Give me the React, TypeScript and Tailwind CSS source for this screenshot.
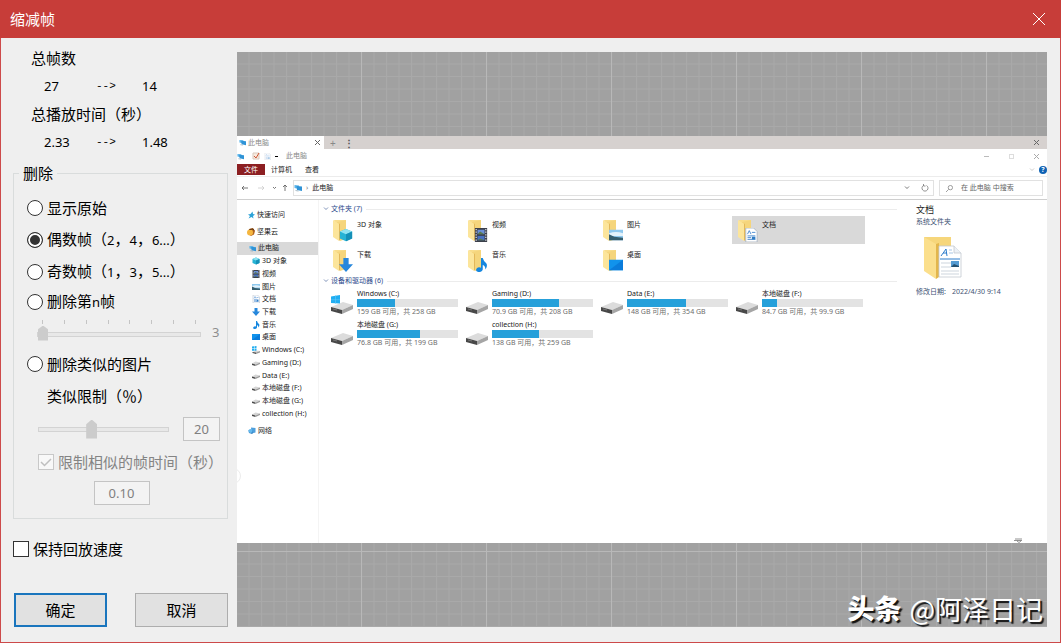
import type { ReactNode } from 'react'

type IconName =
  | 'star' | 'nut' | 'pc' | 'cube' | 'film' | 'image' | 'doc' | 'download'
  | 'music' | 'desktop' | 'drive' | 'windrive' | 'network'

const glyphs: Record<IconName, ReactNode> = {
  star: <path d="M11 1l1 5 4 1-4 3 1 5-4-3-6 3 3-5-4-3 5-1z" fill="#2ea3d8" />,
  nut: (
    <>
      <path d="M4 2l8-2 4 6-2 7-6 3-6-4z" fill="#b5651d" />
      <circle cx="6" cy="9" r="6" fill="#f5b63f" />
      <path d="M5 3l7-1 2 3" stroke="#5b3213" strokeWidth="2" fill="none" />
    </>
  ),
  pc: (
    <>
      <path d="M1 2l9 1v7l-9-2z" fill="#5ab4ea" />
      <path d="M5 4l11 1v9l-10-2z" fill="#2f93d6" />
      <path d="M3 13l6 1" stroke="#8ea5b5" strokeWidth="1.5" />
    </>
  ),
  cube: (
    <>
      <path d="M8 1l7 3v8l-7 3-7-3V4z" fill="#27b3d4" />
      <path d="M8 1l7 3-7 3-7-3z" fill="#8fe3f1" />
      <path d="M8 7l7-3v8l-7 3z" fill="#1590b8" />
    </>
  ),
  film: (
    <>
      <rect x="1" y="0" width="14" height="16" fill="#3b3f4a" />
      <path d="M2.500 1v15M13.500 1v15" stroke="#d5d7dd" strokeWidth="1.500" strokeDasharray="1.500 1.500" />
      <rect x="4" y="2" width="8" height="5" fill="#6a8fd8" />
      <rect x="4" y="9" width="8" height="5" fill="#4870c0" />
      <path d="M4 7l3-3 5 3M4 14l3-2 5 2" fill="#58794e" />
    </>
  ),
  image: (
    <>
      <rect x="0" y="2" width="16" height="12" fill="#8ec8ee" />
      <path d="M0 6q8-3 16 0v3H0z" fill="#e3f2fb" />
      <path d="M0 7l6 3 10 1v3H0z" fill="#355e6e" />
    </>
  ),
  doc: (
    <>
      <path d="M2 0h9l4 4v12H2z" fill="#fff" stroke="#a9b6c4" />
      <path d="M4 7l2-4 2 4M9 5h4M4 9h9M4 11h4M4 13h9" stroke="#3a80cc" fill="none" />
      <path d="M9 10h4v3H9z" fill="#2f7cc4" />
    </>
  ),
  download: <path d="M5 0h6v7h5l-8 9-8-9h5z" fill="#2687dc" />,
  music: (
    <path d="M8 0h2q1 4 4 6 2 3-1 7 0-4-3-5v5q-1 3-5 3-4-1-2-4 2-2 5-1z" fill="#1687df" />
  ),
  desktop: (
    <>
      <rect x="0" y="2" width="16" height="12" fill="#1193ec" />
      <path d="M0 14L16 2v12z" fill="#0a7cdb" />
    </>
  ),
  drive: (
    <>
      <path d="M0 9l7-4 9 2-9 4z" fill="#d5d5d5" />
      <path d="M0 9l7 2v3l-7-2z" fill="#4a4a4a" />
      <path d="M7 11l9-4v3l-9 4z" fill="#9b9b9b" />
    </>
  ),
  windrive: (
    <>
      <path d="M0 1l4-.500v4H0zM5 .4L9 0v4.500H5zM0 5.500h4v4H0zM5 5.500h4V10H5z" fill="#22aef0" />
      <path d="M1 12l7-3 8 1-8 3z" fill="#d5d5d5" />
      <path d="M1 12l7 1v3l-7-2z" fill="#4a4a4a" />
      <path d="M8 13l8-3v3l-8 3z" fill="#9b9b9b" />
    </>
  ),
  network: (
    <>
      <path d="M6 1l9 1v9l-8 2z" fill="#4e9fdc" />
      <path d="M1 6l8 1v7l-7-2z" fill="#2777ba" />
      <circle cx="5" cy="8" r="4" fill="#63b9ee" />
    </>
  ),
}

const Icon = ({ name, className }: { name: IconName; className: string }) => (
  <svg viewBox="0 0 16 16" className={`shrink-0 ${className}`} aria-hidden="true">
    {glyphs[name]}
  </svg>
)

const FolderIcon = ({ badge }: { badge: IconName }) => (
  <span className="relative block h-6 w-[22px] shrink-0">
    <svg viewBox="0 0 22 24" className="h-6 w-[22px]" aria-hidden="true">
      <path d="M3 2h12v19H9z" fill="#f9dd8c" />
      <path d="M6 4l9-2v19l-6 2z" fill="#f5d57c" />
      <path d="M2 2l6 4v17l-6-4z" fill="#fce59b" />
      <path d="M8 6l1-.5V22l-1 1z" fill="#e3b85a" />
    </svg>
    <Icon name={badge} className="absolute right-0 bottom-0 size-[14px]" />
  </span>
)

const DriveIcon = ({ windows }: { windows?: boolean }) => (
  <svg viewBox="0 0 22 20" className="h-5 w-[22px] shrink-0" aria-hidden="true">
    <path d="M0 12l12-5 10 3-11 5z" fill="#dcdcdc" />
    <path d="M0 12l11 3v4L0 16z" fill="#484848" />
    <path d="M11 15l11-5v4l-11 5z" fill="#a5a5a5" />
    <path d="M2 14l4 1" stroke="#777" />
    {windows && <path d="M0 1.500L9 0v8.500L0 8z" fill="#20aef2" />}
    {windows && <path d="M4.500 0v9M0 4.700h9" stroke="#6fcdf8" strokeWidth="0.5" />}
  </svg>
)

const navItems: { icon: IconName; label: string }[] = [
  { icon: 'cube', label: '3D 对象' },
  { icon: 'film', label: '视频' },
  { icon: 'image', label: '图片' },
  { icon: 'doc', label: '文档' },
  { icon: 'download', label: '下载' },
  { icon: 'music', label: '音乐' },
  { icon: 'desktop', label: '桌面' },
  { icon: 'windrive', label: 'Windows (C:)' },
  { icon: 'drive', label: 'Gaming (D:)' },
  { icon: 'drive', label: 'Data (E:)' },
  { icon: 'drive', label: '本地磁盘 (F:)' },
  { icon: 'drive', label: '本地磁盘 (G:)' },
  { icon: 'drive', label: 'collection (H:)' },
]

const folders: { icon: IconName; label: string; selected?: boolean }[] = [
  { icon: 'cube', label: '3D 对象' },
  { icon: 'film', label: '视频' },
  { icon: 'image', label: '图片' },
  { icon: 'doc', label: '文档', selected: true },
  { icon: 'download', label: '下载' },
  { icon: 'music', label: '音乐' },
  { icon: 'desktop', label: '桌面' },
]

const drives = [
  { name: 'Windows (C:)', info: '159 GB 可用，共 258 GB', used: 38, windows: true },
  { name: 'Gaming (D:)', info: '70.9 GB 可用，共 208 GB', used: 66 },
  { name: 'Data (E:)', info: '148 GB 可用，共 354 GB', used: 58 },
  { name: '本地磁盘 (F:)', info: '84.7 GB 可用，共 99.9 GB', used: 15 },
  { name: '本地磁盘 (G:)', info: '76.8 GB 可用，共 199 GB', used: 62 },
  { name: 'collection (H:)', info: '138 GB 可用，共 259 GB', used: 47 },
]

const Cross = ({ className }: { className: string }) => (
  <svg viewBox="0 0 12 12" className={className} fill="none" stroke="currentColor" aria-hidden="true">
    <path d="M0 0l12 12M12 0L0 12" vectorEffect="non-scaling-stroke" />
  </svg>
)

const Chevron = () => (
  <svg viewBox="0 0 6 4" className="h-1 w-[6px] shrink-0" fill="none" stroke="currentColor" strokeWidth="0.6" aria-hidden="true">
    <path d="M1 .5L3 2.500 5 .5" />
  </svg>
)

const SectionTitle = ({ children }: { children: ReactNode }) => (
  <h3 className="flex h-[14px] items-center gap-[2px] pr-3 pl-1 text-[#2b4a8b]">
    <Chevron />
    {children}
    <span className="ml-[2px] h-px flex-1 bg-[#ececec]" />
  </h3>
)

const TopBars = () => (
  <>
    <div className="flex h-[13px] items-center bg-[#d6d1cf] pr-2">
      <div className="flex h-full w-[87px] items-center gap-[2px] bg-white pr-1 pl-[2px] text-[#888]">
        <Icon name="pc" className="size-[7px]" />
        此电脑
        <Cross className="ml-auto size-[5px] text-[#666]" />
      </div>
      <span className="ml-[6px] text-[10px] text-[#888]">+</span>
      <span className="ml-2 text-[10px] font-bold text-[#555]">⋮</span>
      <Cross className="ml-auto size-[5px] text-[#666]" />
    </div>
    <div className="flex h-[14px] items-center gap-2 pr-2 text-[#888]">
      <Icon name="pc" className="size-[7px]" />
      <svg viewBox="0 0 8 8" className="size-2" fill="none" aria-hidden="true">
        <path d="M1 1h6v6H1z" fill="#f7eadf" stroke="#d9c9bd" />
        <path d="M2 4l2 2 3-5" stroke="#cf5634" />
      </svg>
      <Icon name="doc" className="-ml-1 size-[7px] opacity-50" />
      <span className="-ml-1 h-px w-[3px] bg-black" />
      此电脑
      <span className="ml-auto h-px w-[5px] bg-[#bbb]" />
      <span className="ml-3 size-[5px] border border-[#ddd]" />
      <Cross className="ml-3 size-[5px] text-[#aaa]" />
    </div>
    <div className="flex h-[14px] items-center border-b border-[#ececec] text-[#222]">
      <span className="flex h-[11px] w-7 items-center justify-center bg-[#8c1f22] text-white">文件</span>
      <span className="ml-[6px]">计算机</span>
      <span className="ml-[13px]">查看</span>
      <span className="ml-auto flex items-center gap-1 text-[#aaa]">
        <Chevron />
        <span className="flex size-2 items-center justify-center rounded-full bg-[#0f62b4] font-bold text-white">?</span>
      </span>
    </div>
    <div className="flex h-[23px] items-center border-b border-[#cfcfcf] pr-1 pl-1 text-[#333]">
      <svg viewBox="0 0 48 8" className="h-2 w-12 shrink-0" fill="none" stroke="#555" strokeWidth="0.8" aria-hidden="true">
        <path d="M7 4H1l2-2M1 4l2 2" />
        <path d="M17 4h6l-2-2M23 4l-2 2" stroke="#ccc" />
        <path d="M32 3l1.500 1.500L35 3" />
        <path d="M44 7V1l-2 2M44 1l2 2" />
      </svg>
      <div className="ml-1 flex h-4 flex-1 items-center gap-1 border border-[#e1e1e1] pr-1 text-[#222]">
        <Icon name="pc" className="size-2" />
        <span className="text-[#777]">›</span>
        此电脑
        <span className="ml-auto"><Chevron /></span>
        <svg viewBox="0 0 8 8" className="ml-[7px] size-2" fill="none" stroke="#777" strokeWidth="0.8" aria-hidden="true">
          <path d="M5.500 1.500a3 3 0 1 1-3 0M2.500 0v2h2" />
        </svg>
      </div>
      <div className="ml-[5px] flex h-4 w-[104px] items-center gap-2 border border-[#e1e1e1] pl-[6px] text-[#666]">
        <svg viewBox="0 0 8 8" className="size-[7px]" fill="none" stroke="#777" strokeWidth="0.8" aria-hidden="true">
          <circle cx="5" cy="3" r="2.500" />
          <path d="M3 5L0 8" />
        </svg>
        在 此电脑 中搜索
      </div>
    </div>
  </>
)

const Explorer = () => (
  <div className="relative flex min-h-[407px] flex-col overflow-hidden bg-white text-[7px] leading-[10px] whitespace-nowrap text-[#222]">
    <TopBars />
    <div className="flex flex-1">
      <nav className="w-[82px] shrink-0 border-r border-[#f4f4f4] pt-[7px]">
        <div className="flex h-4 items-center gap-[2px] pl-[10px]">
          <Icon name="star" className="size-2" />
          快速访问
        </div>
        <div className="mt-px flex h-4 items-center gap-[2px] pl-[10px]">
          <Icon name="nut" className="size-2" />
          坚果云
        </div>
        <ul className="mt-[2px] flex h-[178px] flex-col">
          <li className="flex flex-1 items-center gap-[2px] bg-[#d9d9d9] pl-3">
            <Icon name="pc" className="size-[7px]" />
            此电脑
          </li>
          {navItems.map((item) => (
            <li key={item.label} className="flex flex-1 items-center gap-[2px] pl-[15px]">
              <Icon name={item.icon} className="size-2" />
              {item.label}
            </li>
          ))}
        </ul>
        <div className="mt-[3px] flex h-4 items-center gap-[2px] pl-[11px]">
          <Icon name="network" className="size-2" />
          网络
        </div>
      </nav>
      <div className="min-w-0 flex-1 pt-[2px]">
        <SectionTitle>文件夹 (7)</SectionTitle>
        <ul className="grid grid-cols-[repeat(4,135px)] gap-y-[2px] pl-2">
          {folders.map((folder) => (
            <li
              key={folder.label}
              className={`mr-[2px] flex h-7 gap-1 pt-[2px] pl-1 ${folder.selected ? 'bg-[#d9d9d9]' : ''}`}
            >
              <FolderIcon badge={folder.icon} />
              <span className="pt-[2px]">{folder.label}</span>
            </li>
          ))}
        </ul>
        <SectionTitle>设备和驱动器 (6)</SectionTitle>
        <ul className="grid grid-cols-[repeat(4,135px)] gap-y-1 pt-px pl-2">
          {drives.map((drive) => (
            <li key={drive.name} className="flex gap-1 pl-1">
              <div className="pt-[6px]">
                <DriveIcon windows={drive.windows} />
              </div>
              <div>
                <p>{drive.name}</p>
                <div className="h-2 w-[101px] bg-[#e3e3e3]">
                  <div className="h-full bg-[#26a0da]" style={{ width: `${drive.used}%` }} />
                </div>
                <p className="leading-[9px] text-[#6d6d6d]">{drive.info}</p>
              </div>
            </li>
          ))}
        </ul>
      </div>
      <aside className="w-[138px] shrink-0 pt-1 pl-[7px]">
        <h3 className="text-[9px] leading-3">文档</h3>
        <p className="pt-px text-[#3d5273]">系统文件夹</p>
        <svg viewBox="0 0 38 46" className="mt-2 ml-2 h-[46px] w-[38px]" aria-hidden="true">
          <path d="M0 2h27v36H12z" fill="#f6d67b" />
          <path d="M0 2l12 7v35L0 36z" fill="#fbdf8c" />
          <path d="M12 9l3-1v34l-3 2z" fill="#e3b64c" />
          <path d="M15 11h15l7 7v24H15z" fill="#fff" stroke="#c3c9d1" strokeWidth="0.8" />
          <path d="M30 11v7h7" fill="#edf1f6" stroke="#c3c9d1" strokeWidth="0.8" />
          <path d="M17 21l5-7 1 7M19 18h4M16 24h20" stroke="#2c7ccb" fill="none" />
          <path d="M25 15h3M25 18h4" stroke="#a9c6e4" />
          <path d="M17 28h10M17 32h10M17 36h18M17 39h18" stroke="#cdd5dd" />
          <rect x="27" y="26" width="8" height="6" fill="#559bd2" />
          <path d="M27 32l3-3 5 2v1z" fill="#24506f" />
        </svg>
        <p className="mt-[6px] text-[#3d5273]">
          修改日期:<span className="ml-[6px]">2022/4/30 9:14</span>
        </p>
      </aside>
    </div>
    <svg viewBox="0 0 10 5" className="absolute right-6 bottom-0 h-[5px] w-[10px]" fill="none" stroke="#777" strokeWidth="0.8" aria-hidden="true">
      <path d="M2 1h7M1 2.500h8M4 3l2 1.500L8 3" />
    </svg>
    <span className="absolute top-[332px] -left-3 h-4 w-4 rounded-full border border-[#ececec]" />
  </div>
)

// 12.5px minor cells with a brighter line every ten of them
const Backdrop = () => (
  <svg className="absolute inset-0 h-full w-full" aria-hidden="true">
    <defs>
      <pattern id="minor" width="12.5" height="12.5" x="11.5" y="11.5" patternUnits="userSpaceOnUse">
        <path d="M.5 0v12.500M0 .5h12.500" stroke="#a9a9a9" fill="none" />
      </pattern>
      <pattern id="major" width="125" height="125" x="124" y="124" patternUnits="userSpaceOnUse">
        <path d="M.5 0v125M0 .5h125" stroke="#b8b8b8" fill="none" />
      </pattern>
    </defs>
    <rect width="100%" height="100%" fill="#a1a1a1" />
    <rect width="100%" height="100%" fill="url(#minor)" />
    <rect width="100%" height="100%" fill="url(#major)" />
  </svg>
)

const radioClass =
  'size-4 shrink-0 appearance-none rounded-full border border-[#333] bg-white checked:bg-[#333] checked:shadow-[inset_0_0_0_2px_#fff]'

const sliderClass =
  'h-5 appearance-none bg-transparent [&::-webkit-slider-runnable-track]:h-[5px] [&::-webkit-slider-runnable-track]:border [&::-webkit-slider-runnable-track]:border-[#d3d3d3] [&::-webkit-slider-runnable-track]:bg-[#e8e8e8] [&::-webkit-slider-thumb]:appearance-none [&::-webkit-slider-thumb]:bg-[#cccccc] [&::-webkit-slider-thumb]:[clip-path:polygon(50%_0,100%_25%,100%_100%,0_100%,0_25%)]'

const Small = ({ children }: { children: ReactNode }) => <span className="text-[13px]">{children}</span>

const ModeRadio = ({ label, tall = true, checked }: { label: ReactNode; tall?: boolean; checked?: boolean }) => (
  <label className={`flex items-center gap-1 pl-[13px] ${tall ? 'h-8' : 'h-7'}`}>
    <input type="radio" name="mode" defaultChecked={checked} className={radioClass} />
    <span className="pb-px">{label}</span>
  </label>
)

const StatRow = ({ before, after }: { before: string; after: string }) => (
  <div className="grid h-5 grid-cols-[52px_46px_auto] items-center pl-[13px] text-[13px]">
    <span>{before}</span>
    <span className="font-['Liberation_Mono',monospace] text-[11px]">--&gt;</span>
    <span>{after}</span>
  </div>
)

const fieldClass = 'h-6 border border-[#c4c4c4] bg-[#f3f3f3] text-center text-[13px] text-[#808080]'

const Settings = () => (
  <form className="flex w-[236px] shrink-0 flex-col pt-[10px] pr-[9px] pb-[15px] pl-3 text-[15px] leading-5 whitespace-nowrap text-black">
    <div className="flex flex-col gap-2 pl-[18px]">
      <h2>总帧数</h2>
      <StatRow before="27" after="14" />
      <h2>总播放时间（秒）</h2>
      <StatRow before="2.33" after="1.48" />
    </div>

    <fieldset className="mt-[11px] border border-[#d9dcdc] pt-[9px] pb-[10px]">
      <legend className="ml-[5px] px-1">删除</legend>
      <ModeRadio label="显示原始" />
      <ModeRadio label={<>偶数帧（<Small>2</Small>，<Small>4</Small>，<Small>6...</Small>）</>} checked />
      <ModeRadio label={<>奇数帧（<Small>1</Small>，<Small>3</Small>，<Small>5...</Small>）</>} />
      <ModeRadio label={<>删除第<Small>n</Small>帧</>} tall={false} />
      <div className="flex h-8 items-center pl-[23px] text-[#8e8e8e]">
        <div className="w-[164px]">
          <div className="flex justify-between px-[5px]">
            {[3, 4, 5, 6, 7, 8, 9, 10].map((n) => (
              <span key={n} className="h-1 w-px bg-[#c4c4c4]" />
            ))}
          </div>
          <input
            type="range"
            min={3}
            max={10}
            defaultValue={3}
            disabled
            aria-label="删除第n帧"
            className={`block w-full ${sliderClass} [&::-webkit-slider-thumb]:-mt-[7px] [&::-webkit-slider-thumb]:h-[15px] [&::-webkit-slider-thumb]:w-[10px]`}
          />
        </div>
        <output className="ml-[11px] text-[13px]">3</output>
      </div>
      <ModeRadio label="删除类似的图片" />
      <div className="flex h-8 items-center pl-[33px]">
        <label htmlFor="limit">类似限制（％）</label>
      </div>
      <div className="flex h-[34px] items-center justify-between pr-[7px] pl-6">
        <input
          type="range"
          id="limit"
          min={0}
          max={50}
          defaultValue={20}
          disabled
          className={`w-[131px] ${sliderClass} [&::-webkit-slider-thumb]:-mt-2 [&::-webkit-slider-thumb]:h-[19px] [&::-webkit-slider-thumb]:w-[11px]`}
        />
        <input type="text" defaultValue="20" disabled aria-label="类似限制（％）" className={`w-[37px] ${fieldClass}`} />
      </div>
      <label className="flex h-8 items-center gap-1 pl-6 text-[#848484]">
        <span className="grid shrink-0 place-items-center">
          <input
            type="checkbox"
            defaultChecked
            disabled
            className="col-start-1 row-start-1 size-4 appearance-none border border-[#c8c8c8] bg-[#f8f8f8]"
          />
          <svg viewBox="0 0 16 16" className="col-start-1 row-start-1 size-4" fill="none" stroke="#bfbfbf" strokeWidth="1.5" aria-hidden="true">
            <path d="M3 8l3.500 3.500L13 5" />
          </svg>
        </span>
        限制相似的帧时间（秒）
      </label>
      <div className="flex h-[30px] items-center justify-center pl-[2px]">
        <input type="text" defaultValue="0.10" disabled aria-label="限制相似的帧时间（秒）" className={`w-14 ${fieldClass}`} />
      </div>
    </fieldset>

    <label className="mt-[14px] flex h-8 items-center gap-1">
      <input type="checkbox" className="size-4 appearance-none border border-[#333] bg-white checked:bg-[#333]" />
      <span className="pb-px">保持回放速度</span>
    </label>

    <div className="mt-7 flex justify-between pl-px">
      <button type="button" className="h-[34px] w-[93px] border-2 border-[#1a75bd] bg-[#e1e1e1]">
        确定
      </button>
      <button type="button" className="h-[34px] w-[93px] border border-[#adadad] bg-[#e1e1e1]">
        取消
      </button>
    </div>
  </form>
)

export default function App() {
  return (
    <div className="flex min-h-screen flex-col border-x border-b border-[#cd4a4a] bg-[#efefef] font-['Noto_Sans','Noto_Sans_CJK_SC',sans-serif]">
      <header className="-mx-px flex h-[38px] items-center justify-between bg-[#c73d39] pr-4 pl-[10px] text-white">
        <h1 className="text-[15px]">缩减帧</h1>
        <button type="button" aria-label="关闭">
          <Cross className="size-3" />
        </button>
      </header>
      <main className="flex flex-1">
        <Settings />
        <section className="relative mt-[14px] mr-[13px] mb-[15px] flex min-w-0 flex-1 flex-col justify-center">
          <Backdrop />
          <Explorer />
          <p className="absolute right-1 bottom-0 flex items-center gap-2 text-[27px] leading-9 text-white [text-shadow:2px_2px_1px_#111]">
            <b className="font-black">头条</b>
            <span className="font-['Noto_Sans_CJK_SC',sans-serif]">@阿泽日记</span>
          </p>
        </section>
      </main>
    </div>
  )
}
